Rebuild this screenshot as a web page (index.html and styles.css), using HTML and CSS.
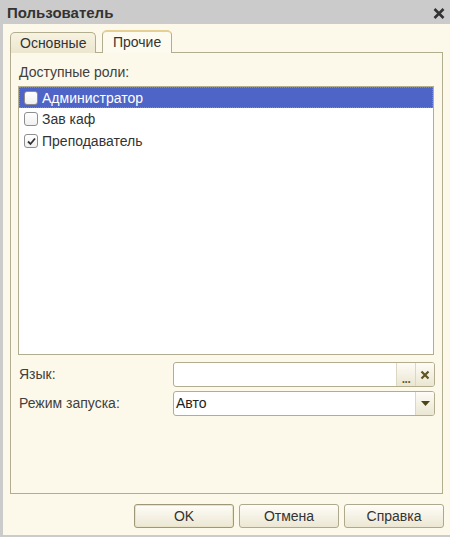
FILE: index.html
```html
<!DOCTYPE html>
<html lang="ru">
<head>
<meta charset="utf-8">
<title>Пользователь</title>
<link rel="stylesheet" href="styles.css">
</head>
<body>
<div class="window">
  <div class="titlebar">
    <span class="title">Пользователь</span>
    <svg class="close" width="12" height="11" viewBox="0 0 12 11"><path d="M1.5 1 L10.5 10 M10.5 1 L1.5 10" stroke="#333" stroke-width="2.6" fill="none"/></svg>
  </div>
  <div class="content">
    <div class="tabs">
      <div class="tab">Основные</div>
      <div class="tab active">Прочие</div>
    </div>
    <div class="panel">
      <div class="label-top">Доступные роли:</div>
      <div class="list">
        <div class="row selected"><span class="cb"></span><span>Администратор</span></div>
        <div class="row"><span class="cb"></span><span>Зав каф</span></div>
        <div class="row"><span class="cb checked"><svg width="11" height="11" viewBox="0 0 11 11"><path d="M2 5.5 L4.5 8 L9 2.5" stroke="#333" stroke-width="1.8" fill="none"/></svg></span><span>Преподаватель</span></div>
      </div>
      <div class="fields">
        <div class="flabel">Язык:</div>
        <div class="field">
          <span class="fval"></span>
          <span class="fbtn dots">...</span>
          <span class="fbtn clr"><svg width="10" height="10" viewBox="0 0 10 10"><path d="M1.5 1.5 L8.5 8.5 M8.5 1.5 L1.5 8.5" stroke="#5e5424" stroke-width="2.2" fill="none"/></svg></span>
        </div>
        <div class="flabel">Режим запуска:</div>
        <div class="field">
          <span class="fval">Авто</span>
          <span class="fbtn drop"><svg width="9" height="5" viewBox="0 0 9 5"><path d="M0 0 L9 0 L4.5 5 Z" fill="#4f4316"/></svg></span>
        </div>
      </div>
    </div>
    <div class="buttons">
      <div class="btn default">OK</div>
      <div class="btn">Отмена</div>
      <div class="btn">Справка</div>
    </div>
  </div>
</div>
</body>
</html>
```
FILE: styles.css
```css
html, body {
  margin: 0;
  padding: 0;
}
body {
  width: 450px;
  height: 537px;
  background: #cbcbcb;
  font-family: "Liberation Sans", Arial, sans-serif;
  font-size: 14px;
  color: #404040;
  overflow: hidden;
}
.window {
  display: flex;
  flex-direction: column;
  height: 537px;
}
.titlebar {
  height: 24px;
  display: flex;
  align-items: center;
  justify-content: space-between;
  padding: 0 5px 0 7px;
  flex: none;
}
.title {
  font-weight: bold;
  font-size: 15px;
  color: #333;
}
.close {
  display: block;
  margin-top: 2px;
}
.content {
  height: 511px;
  margin: 0 0 2px 3px;
  background: #fcf9ea;
  padding: 7px 7px 7px 7px;
  box-sizing: border-box;
  display: flex;
  flex-direction: column;
}
.tabs {
  display: flex;
  align-items: flex-end;
  height: 22px;
  gap: 6px;
  position: relative;
  z-index: 1;
  margin-bottom: -1px;
}
.tab {
  height: 21px;
  box-sizing: border-box;
  border: 1px solid #b3ad90;
  border-bottom: none;
  border-radius: 5px 5px 0 0;
  background: linear-gradient(#f7f3e1, #ece6cf);
  padding: 0 9px;
  width: 86px;
  line-height: 21px;
  font-size: 14px;
  color: #333;
}
.tab.active {
  height: 23px;
  width: 70px;
  background: #fdfbf0;
  border-top: 2px solid #e8cf8a;
  border-color: #e6cf93 #b3ad90 transparent #b3ad90;
  padding: 0 10px;
  line-height: 21px;
}
.panel {
  flex: 1;
  border: 1px solid #b3ad90;
  background: #fcf9ea;
  padding: 11px 8px 0 7px;
  display: flex;
  flex-direction: column;
}
.label-top {
  height: 16px;
  line-height: 16px;
  padding-left: 1px;
  margin-bottom: 6px;
}
.list {
  height: 269px;
  box-sizing: border-box;
  border: 1px solid #b3ad90;
  background: #ffffff;
  width: 416px;
}
.row {
  height: 22px;
  display: flex;
  align-items: center;
  padding-left: 5px;
  box-sizing: border-box;
  color: #333;
}
.row.selected {
  height: 21px;
  background: #4e64c6;
  color: #ffffff;
  outline: 1px dotted #8a8a8a;
  outline-offset: -1px;
}
.cb {
  width: 14px;
  height: 14px;
  box-sizing: border-box;
  border: 1px solid #8e8e8e;
  border-radius: 3px;
  background: linear-gradient(#ffffff, #f0f0f0);
  margin-right: 4px;
  display: flex;
  align-items: center;
  justify-content: center;
}
.fields {
  display: grid;
  grid-template-columns: 155px 262px;
  grid-auto-rows: 25px;
  row-gap: 4px;
  margin-top: 7px;
}
.flabel {
  line-height: 25px;
  padding-left: 1px;
}
.field {
  border: 1px solid #b3ad90;
  border-radius: 3px;
  background: #ffffff;
  display: flex;
  align-items: stretch;
  overflow: hidden;
}
.fval {
  flex: 1;
  line-height: 23px;
  padding-left: 2px;
  font-size: 14px;
  color: #222;
}
.fbtn {
  width: 18px;
  background: linear-gradient(#fdfcf6, #ebe6d2);
  border-left: 1px solid #dcd7c2;
  display: flex;
  align-items: center;
  justify-content: center;
}
.fbtn.dots {
  align-items: flex-end;
  font-weight: bold;
  color: #6a5f2d;
  line-height: 14px;
  font-size: 12px;
  letter-spacing: -0.5px;
}
.buttons {
  display: flex;
  justify-content: flex-end;
  gap: 5px;
  margin-top: 10px;
  margin-right: -1px;
  flex: none;
}
.btn {
  width: 100px;
  height: 24px;
  box-sizing: border-box;
  border: 1px solid #aea88c;
  border-radius: 3px;
  background: linear-gradient(#fefdf8, #ece7d3);
  text-align: center;
  line-height: 22px;
  font-size: 14px;
  color: #333;
}
.btn.default {
  border-color: #9e9778;
  box-shadow: inset 0 0 0 1px #e9e3c8;
}
```
